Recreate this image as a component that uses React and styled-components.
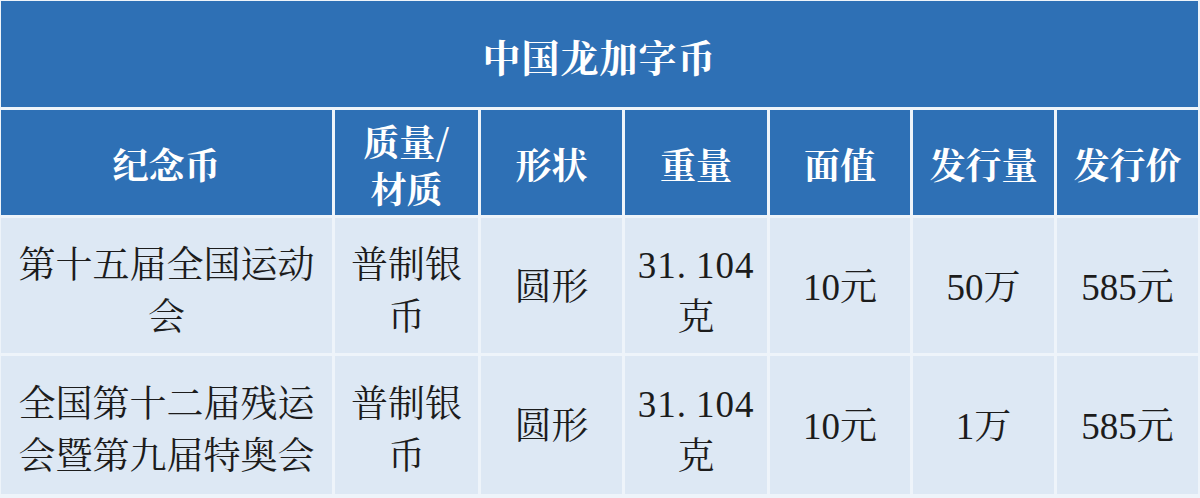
import React from "react";
import styled, { createGlobalStyle } from "styled-components";

const Global = createGlobalStyle`
  html, body { margin: 0; padding: 0; background: #f4f8fc; }
  body { width: 1200px; height: 498px; overflow: hidden; }
`;

const SERIF = `"Liberation Serif", "Noto Serif CJK SC", "Noto Sans CJK SC", serif`;
const BOLD = `"Noto Serif CJK SC", "Noto Sans CJK SC", "Liberation Serif", serif`;

const Table = styled.div`
  display: grid;
  grid-template-columns: 331px 143px 141px 142px 140px 141px 141px;
  grid-template-rows: 106px 105px 135px 138px;
  gap: 3px;
  padding: 1px 2px 4px 1px;
  width: 1200px;
  height: 498px;
  box-sizing: border-box;
  background: #eef4fa;
`;

const Cell = styled.div`
  display: flex;
  align-items: center;
  justify-content: center;
  text-align: center;
  box-sizing: border-box;
  padding: 0 6px;
`;

const TitleCell = styled(Cell)`
  grid-column: 1 / -1;
  background: #2e70b5;
  color: #ffffff;
  font-family: ${BOLD};
  font-weight: 700;
  font-size: 38px;
  letter-spacing: 1px;
  padding-top: 2px;
`;

const HeadCell = styled(Cell)`
  background: #2e70b5;
  color: #ffffff;
  font-family: ${BOLD};
  font-weight: 700;
  font-size: 36px;
  line-height: 47px;
  padding-top: 2px;
`;

const BodyCell = styled(Cell)`
  background: #dde8f4;
  color: #1c1c1c;
  font-family: ${SERIF};
  font-weight: 400;
  font-size: 37px;
  line-height: 52px;
  padding-top: ${(p) => (p.$lines > 1 ? "12px" : "4px")};
`;

const Num = styled.span`
  letter-spacing: 1px;
`;

const Dot = styled.span`
  margin-right: 9px;
`;

const heads = [["纪念币"], ["质量/", "材质"], ["形状"], ["重量"], ["面值"], ["发行量"], ["发行价"]];

const Weight = () => (
  <Num>
    31<Dot>.</Dot>104
  </Num>
);

const rows = [
  [["第十五届全国运动", "会"], ["普制银", "币"], ["圆形"], [<Weight key="w" />, "克"], ["10元"], ["50万"], ["585元"]],
  [["全国第十二届残运", "会暨第九届特奥会"], ["普制银", "币"], ["圆形"], [<Weight key="w" />, "克"], ["10元"], ["1万"], ["585元"]],
];

const Lines = ({ lines }) => (
  <span>
    {lines.map((l, i) => (
      <React.Fragment key={i}>
        {i > 0 && <br />}
        {l}
      </React.Fragment>
    ))}
  </span>
);

export default function App() {
  return (
    <>
      <Global />
      <Table>
        <TitleCell>中国龙加字币</TitleCell>
        {heads.map((h, i) => (
          <HeadCell key={i}>
            <Lines lines={h} />
          </HeadCell>
        ))}
        {rows.map((r, ri) =>
          r.map((c, ci) => (
            <BodyCell key={`${ri}-${ci}`} $lines={c.length}>
              <Lines lines={c} />
            </BodyCell>
          ))
        )}
      </Table>
    </>
  );
}
